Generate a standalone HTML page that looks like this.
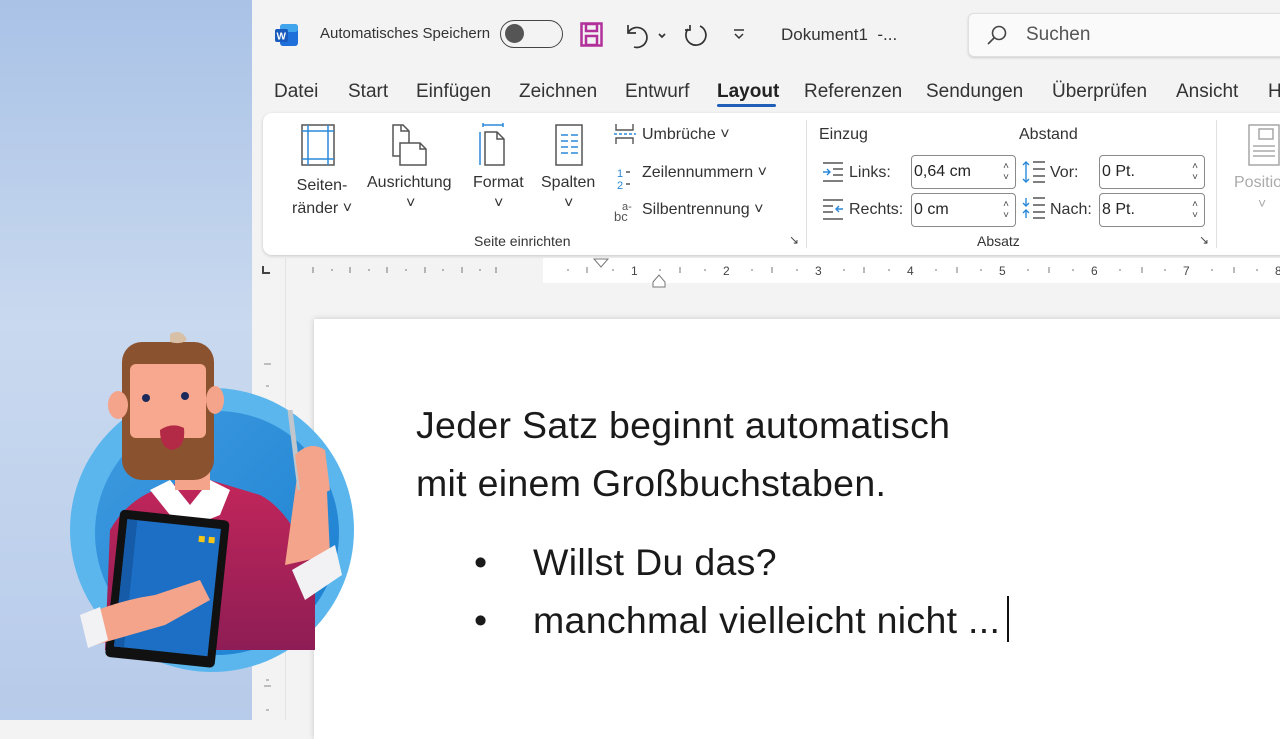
<!DOCTYPE html>
<html><head><meta charset="utf-8"><style>
*{margin:0;padding:0;box-sizing:border-box}
body{width:1280px;height:720px;overflow:hidden;position:relative;font-family:"Liberation Sans","DejaVu Sans",sans-serif;background:#f3f3f3;color:#242424}
.abs{position:absolute;white-space:nowrap}
#left{position:absolute;left:0;top:0;width:252px;height:720px;background:linear-gradient(180deg,#a9c2e6 0%,#c9d9ef 45%,#b7cbea 100%)}
.tab{position:absolute;top:81px;font-size:19px;color:#333}
.sm{font-size:16px;color:#333}
.box{position:absolute;border:1px solid #8a8a8a;border-radius:4px;background:#fff;height:34px;font-size:16px;padding:7px 0 0 2px}
.arr{position:absolute;right:6px;font-size:10px;color:#444;line-height:11px;top:5px;text-align:center}
.doc{font-size:37.5px;color:#1a1a1a;letter-spacing:0.3px}
</style></head><body>
<div id="left"></div>
<svg class="abs" style="left:274px;top:23px" width="26" height="24"><rect x="6" y="1" width="18" height="22" rx="3" fill="#1e6fd9"/><rect x="6" y="1" width="18" height="8" rx="3" fill="#41a5ee"/><rect x="1" y="6" width="13" height="13" rx="2" fill="#185abd"/><text x="2.5" y="16.5" font-size="10" font-weight="bold" fill="#fff" font-family="Liberation Sans">W</text></svg>
<div class="abs" style="left:320px;top:25px;font-size:15px;color:#333">Automatisches Speichern</div>
<div class="abs" style="left:500px;top:20px;width:63px;height:28px;border:1.5px solid #444;border-radius:14px"><div style="position:absolute;left:4px;top:3px;width:19px;height:19px;border-radius:50%;background:#555"></div></div>
<svg class="abs" style="left:580px;top:22px" width="24" height="26"><rect x="1.5" y="1.5" width="20" height="22" fill="none" stroke="#b2309a" stroke-width="2.5"/><rect x="6" y="2" width="11" height="7" fill="none" stroke="#b2309a" stroke-width="2.5"/><rect x="6" y="14" width="11" height="9" fill="none" stroke="#b2309a" stroke-width="2.5"/></svg>
<svg class="abs" style="left:624px;top:22px" width="90" height="28" fill="none" stroke="#333" stroke-width="1.7"><path d="M4 3v8h8"/><path d="M4 11 A10 10 0 1 1 10 25"/><path d="M35 12l3 3 3-3"/><path d="M76 4A10 10 0 1 1 64 7"/><path d="M66 3v5h-5"/></svg>
<svg class="abs" style="left:732px;top:28px" width="14" height="14" fill="none" stroke="#333" stroke-width="1.5"><path d="M2 2h10M3 6l4 4 4-4"/></svg>
<div class="abs" style="left:781px;top:25px;font-size:17px;color:#333">Dokument1&nbsp; -...</div>
<div class="abs" style="left:968px;top:13px;width:330px;height:44px;background:#fafafa;border:1px solid #e0e0e0;border-radius:6px;box-shadow:0 1px 2px #ccc"></div>
<svg class="abs" style="left:986px;top:24px" width="22" height="22" fill="none" stroke="#444" stroke-width="1.6"><circle cx="13" cy="9" r="6.5"/><path d="M8 14l-6 6"/></svg>
<div class="abs" style="left:1026px;top:24px;font-size:19px;color:#555">Suchen</div>
<div class="tab" style="left:274px">Datei</div>
<div class="tab" style="left:348px">Start</div>
<div class="tab" style="left:416px">Einfügen</div>
<div class="tab" style="left:519px">Zeichnen</div>
<div class="tab" style="left:625px">Entwurf</div>
<div class="tab" style="left:717px;font-weight:bold;color:#222">Layout</div>
<div class="abs" style="left:717px;top:104px;width:59px;height:3px;background:#1f5fb8;border-radius:2px"></div>
<div class="tab" style="left:804px">Referenzen</div>
<div class="tab" style="left:926px">Sendungen</div>
<div class="tab" style="left:1052px">Überprüfen</div>
<div class="tab" style="left:1176px">Ansicht</div>
<div class="tab" style="left:1268px">H</div>
<div class="abs" style="left:263px;top:113px;width:1040px;height:142px;background:#fff;border-radius:9px;box-shadow:0 1px 3px rgba(0,0,0,.18)"></div>
<svg class="abs" style="left:300px;top:123px" width="300" height="44" fill="none" stroke="#555" stroke-width="1.5">
<rect x="2" y="2" width="32" height="40"/><path d="M8 2v40M28 2v40M2 8h32M2 36h32" stroke="#2b88d8"/>
<path d="M93 2h10l6 6v25H93z"/><path d="M101 2v6h8"/><path d="M100 20h20l6 6v16H100z" fill="#fff"/><path d="M120 20v6h6"/>
<path d="M183 2h20M183 0v4M203 0v4" stroke="#2b88d8"/><path d="M180 9v33" stroke="#2b88d8"/><path d="M185 9h12l7 7v26H185z"/><path d="M197 9v7h7"/>
<rect x="256" y="2" width="26" height="40"/><path d="M261 12h7M271 12h7M261 18h7M271 18h7M261 24h7M271 24h7M261 30h7M271 30h7" stroke="#2b88d8"/>
</svg>
<div class="abs sm" style="left:292px;top:174px;text-align:center;line-height:23px">Seiten-<br>ränder ˅</div>
<div class="abs sm" style="left:367px;top:174px">Ausrichtung</div><div class="abs sm" style="left:406px;top:195px">˅</div>
<div class="abs sm" style="left:473px;top:174px">Format</div><div class="abs sm" style="left:494px;top:195px">˅</div>
<div class="abs sm" style="left:541px;top:174px">Spalten</div><div class="abs sm" style="left:564px;top:195px">˅</div>
<svg class="abs" style="left:613px;top:123px" width="24" height="100" fill="none" stroke="#555" stroke-width="1.4"><path d="M3 1v6h17V1M3 21v-6h17v6"/><path d="M1 11h22" stroke="#2b88d8" stroke-dasharray="3 2"/><text x="4" y="54" font-size="11" fill="#2b88d8" stroke="none" font-family="Liberation Sans">1</text><text x="4" y="66" font-size="11" fill="#2b88d8" stroke="none" font-family="Liberation Sans">2</text><path d="M13 49h4M13 61h4"/><text x="9" y="87" font-size="11" fill="#555" stroke="none" font-family="Liberation Sans">a-</text><text x="1" y="98" font-size="13" fill="#555" stroke="none" font-family="Liberation Sans">bc</text></svg>
<div class="abs sm" style="left:642px;top:126px">Umbrüche ˅</div>
<div class="abs sm" style="left:642px;top:164px">Zeilennummern ˅</div>
<div class="abs sm" style="left:642px;top:201px">Silbentrennung ˅</div>
<div class="abs" style="left:474px;top:233px;font-size:14px;color:#333">Seite einrichten</div>
<div class="abs" style="left:789px;top:233px;font-size:12px;color:#444">↘</div>
<div class="abs" style="left:806px;top:120px;width:1px;height:128px;background:#e0e0e0"></div>
<div class="abs sm" style="left:819px;top:126px">Einzug</div>
<div class="abs sm" style="left:1019px;top:126px">Abstand</div>
<svg class="abs" style="left:822px;top:161px" width="24" height="60" fill="none" stroke="#555" stroke-width="1.4"><path d="M1 2h20M11 8h10M11 14h10M1 20h20"/><path d="M1 11h7M5 8l3 3-3 3" stroke="#2b88d8"/><path d="M1 39h20M1 45h10M1 51h10M1 58h20"/><path d="M21 48h-7M17 45l-3 3 3 3" stroke="#2b88d8"/></svg>
<div class="abs sm" style="left:849px;top:164px">Links:</div>
<div class="abs sm" style="left:849px;top:201px">Rechts:</div>
<div class="box" style="left:911px;top:155px;width:105px">0,64 cm<div class="arr">˄<br>˅</div></div>
<div class="box" style="left:911px;top:193px;width:105px">0 cm<div class="arr">˄<br>˅</div></div>
<svg class="abs" style="left:1021px;top:160px" width="26" height="62" fill="none" stroke-width="1.4"><path d="M5 2v20M2 5l3-3 3 3M2 19l3 3 3-3" stroke="#2b88d8"/><path d="M12 2h12M12 9h12M12 16h12M12 22h12" stroke="#555"/><path d="M5 38v8M2 43l3 3 3-3M5 50v8M2 53l3-3 3 3" stroke="#2b88d8"/><path d="M12 38h12M12 45h12M12 52h12M12 58h12" stroke="#555"/></svg>
<div class="abs sm" style="left:1050px;top:164px">Vor:</div>
<div class="abs sm" style="left:1050px;top:201px">Nach:</div>
<div class="box" style="left:1099px;top:155px;width:106px">0 Pt.<div class="arr">˄<br>˅</div></div>
<div class="box" style="left:1099px;top:193px;width:106px">8 Pt.<div class="arr">˄<br>˅</div></div>
<div class="abs" style="left:977px;top:233px;font-size:14px;color:#333">Absatz</div>
<div class="abs" style="left:1199px;top:233px;font-size:12px;color:#444">↘</div>
<div class="abs" style="left:1216px;top:120px;width:1px;height:128px;background:#e0e0e0"></div>
<svg class="abs" style="left:1248px;top:124px" width="32" height="42" fill="none" stroke="#999" stroke-width="1.3"><rect x="1" y="1" width="30" height="40"/><rect x="11" y="5" width="14" height="10"/><path d="M5 22h22M5 27h22M5 32h22"/></svg>
<div class="abs" style="left:1234px;top:174px;font-size:16px;color:#aaa">Positio</div>
<div class="abs" style="left:1258px;top:195px;font-size:14px;color:#aaa">˅</div>
<div class="abs" style="left:262px;top:266px;width:8px;height:8px;border-left:2px solid #444;border-bottom:2px solid #444"></div>
<div class="abs" style="left:543px;top:258px;width:737px;height:25px;background:#fff"></div>
<svg class="abs" style="left:285px;top:258px" width="995" height="30" font-family="Liberation Sans" font-size="12" fill="#444">
<g stroke="#777" stroke-width="1">
<path d="M28 9v6M65 9v6M102 9v6M140 9v6M177 9v6M211 9v6M302 9v6M395 9v6M487 9v6M579 9v6M672 9v6M764 9v6M857 9v6M949 9v6"/>
<path d="M47 11v2M84 11v2M121 11v2M158 11v2M195 11v2M283 11v2M328 11v2M375 11v2M420 11v2M467 11v2M512 11v2M559 11v2M604 11v2M651 11v2M696 11v2M743 11v2M788 11v2M835 11v2M880 11v2M927 11v2M972 11v2"/>
</g>
<text x="346" y="17">1</text><text x="438" y="17">2</text><text x="530" y="17">3</text><text x="622" y="17">4</text><text x="714" y="17">5</text><text x="806" y="17">6</text><text x="898" y="17">7</text><text x="990" y="17">8</text>
<path d="M309 1h14l-7 8z" fill="#fff" stroke="#777"/><path d="M368 24l6-7 6 7v5h-12z" fill="#fff" stroke="#777"/>
</svg>
<div class="abs" style="left:285px;top:258px;width:1px;height:462px;background:#e2e2e2"></div>
<svg class="abs" style="left:260px;top:290px" width="20" height="430" stroke="#888"><path d="M4 74h7M6 96h3M4 134h7M6 170h3M4 230h7M6 275h3M4 305h7M6 343h3M4 366h7M6 390h3M4 396h7M6 420h3"/></svg>
<div class="abs" style="left:314px;top:319px;width:980px;height:420px;background:#fff;box-shadow:0 0 6px rgba(0,0,0,.18)"></div>
<div class="abs doc" style="left:416px;top:396px;line-height:58px">Jeder Satz beginnt automatisch<br>mit einem Großbuchstaben.</div>
<div class="abs doc" style="left:474px;top:533px;line-height:58px">•<br>•</div>
<div class="abs doc" style="left:533px;top:533px;line-height:58px">Willst Du das?<br>manchmal vielleicht nicht ...</div>
<div class="abs" style="left:1007px;top:596px;width:2px;height:46px;background:#111"></div>
<svg class="abs" style="left:60px;top:330px" width="320" height="350">
<defs><linearGradient id="c" x1="0" y1="0" x2="1" y2="1"><stop offset="0" stop-color="#3f9be0"/><stop offset="1" stop-color="#1a7fd0"/></linearGradient><linearGradient id="s" x1="0" y1="0" x2="0" y2="1"><stop offset="0" stop-color="#c2265a"/><stop offset="1" stop-color="#8e1d55"/></linearGradient></defs>
<circle cx="152" cy="200" r="142" fill="#5bb6ee"/><circle cx="157" cy="203" r="122" fill="url(#c)"/>
<path d="M45 320 L50 200 Q70 165 110 155 L150 150 L200 165 Q230 180 255 240 L255 320 Z" fill="url(#s)"/>
<path d="M225 235 L270 225 L265 120 L240 125 Z" fill="#f4a48a"/>
<path d="M232 240 L275 215 L282 245 L245 270 Z" fill="#f2f2f5"/>
<path d="M230 80 L240 160" stroke="#c0c6cc" stroke-width="5"/>
<path d="M235 125 q15 -15 30 -5 l5 40 q-15 10 -30 0 Z" fill="#f4a48a"/>
<path d="M90 160 L110 150 L130 175 L150 150 L170 160 L160 185 L135 195 L110 185 Z" fill="#fff"/>
<path d="M115 130 h35 v30 h-35z" fill="#f4a48a"/>
<rect x="62" y="12" width="92" height="138" rx="20" fill="#8b5230"/>
<rect x="70" y="34" width="76" height="74" rx="6" fill="#f7a88e"/>
<ellipse cx="58" cy="75" rx="10" ry="14" fill="#f4a48a"/><ellipse cx="155" cy="70" rx="9" ry="14" fill="#f4a48a"/>
<circle cx="86" cy="68" r="4" fill="#1b2a5a"/><circle cx="125" cy="66" r="4" fill="#1b2a5a"/>
<path d="M100 100 q12 -8 24 -2 q2 20 -12 22 q-12 -2 -12 -20z" fill="#b22a45"/>
<path d="M110 4 q12 -6 17 6 q-6 5 -17 2" fill="#d8c0a6"/>
<g transform="rotate(6 110 262)"><rect x="52" y="185" width="110" height="148" rx="5" fill="#111"/><rect x="60" y="194" width="94" height="128" fill="#1c6fc4"/><rect x="60" y="194" width="10" height="128" fill="#155ba8"/><rect x="133" y="203" width="6" height="6" fill="#f5c518"/><rect x="143" y="203" width="6" height="6" fill="#f5c518"/></g>
<path d="M25 285 Q60 270 95 265 L140 250 L150 270 L105 295 Q70 305 35 315 Z" fill="#f4a48a"/>
<path d="M20 285 L40 277 L48 310 L28 318 Z" fill="#f2f2f5"/>
</svg>
</body></html>
